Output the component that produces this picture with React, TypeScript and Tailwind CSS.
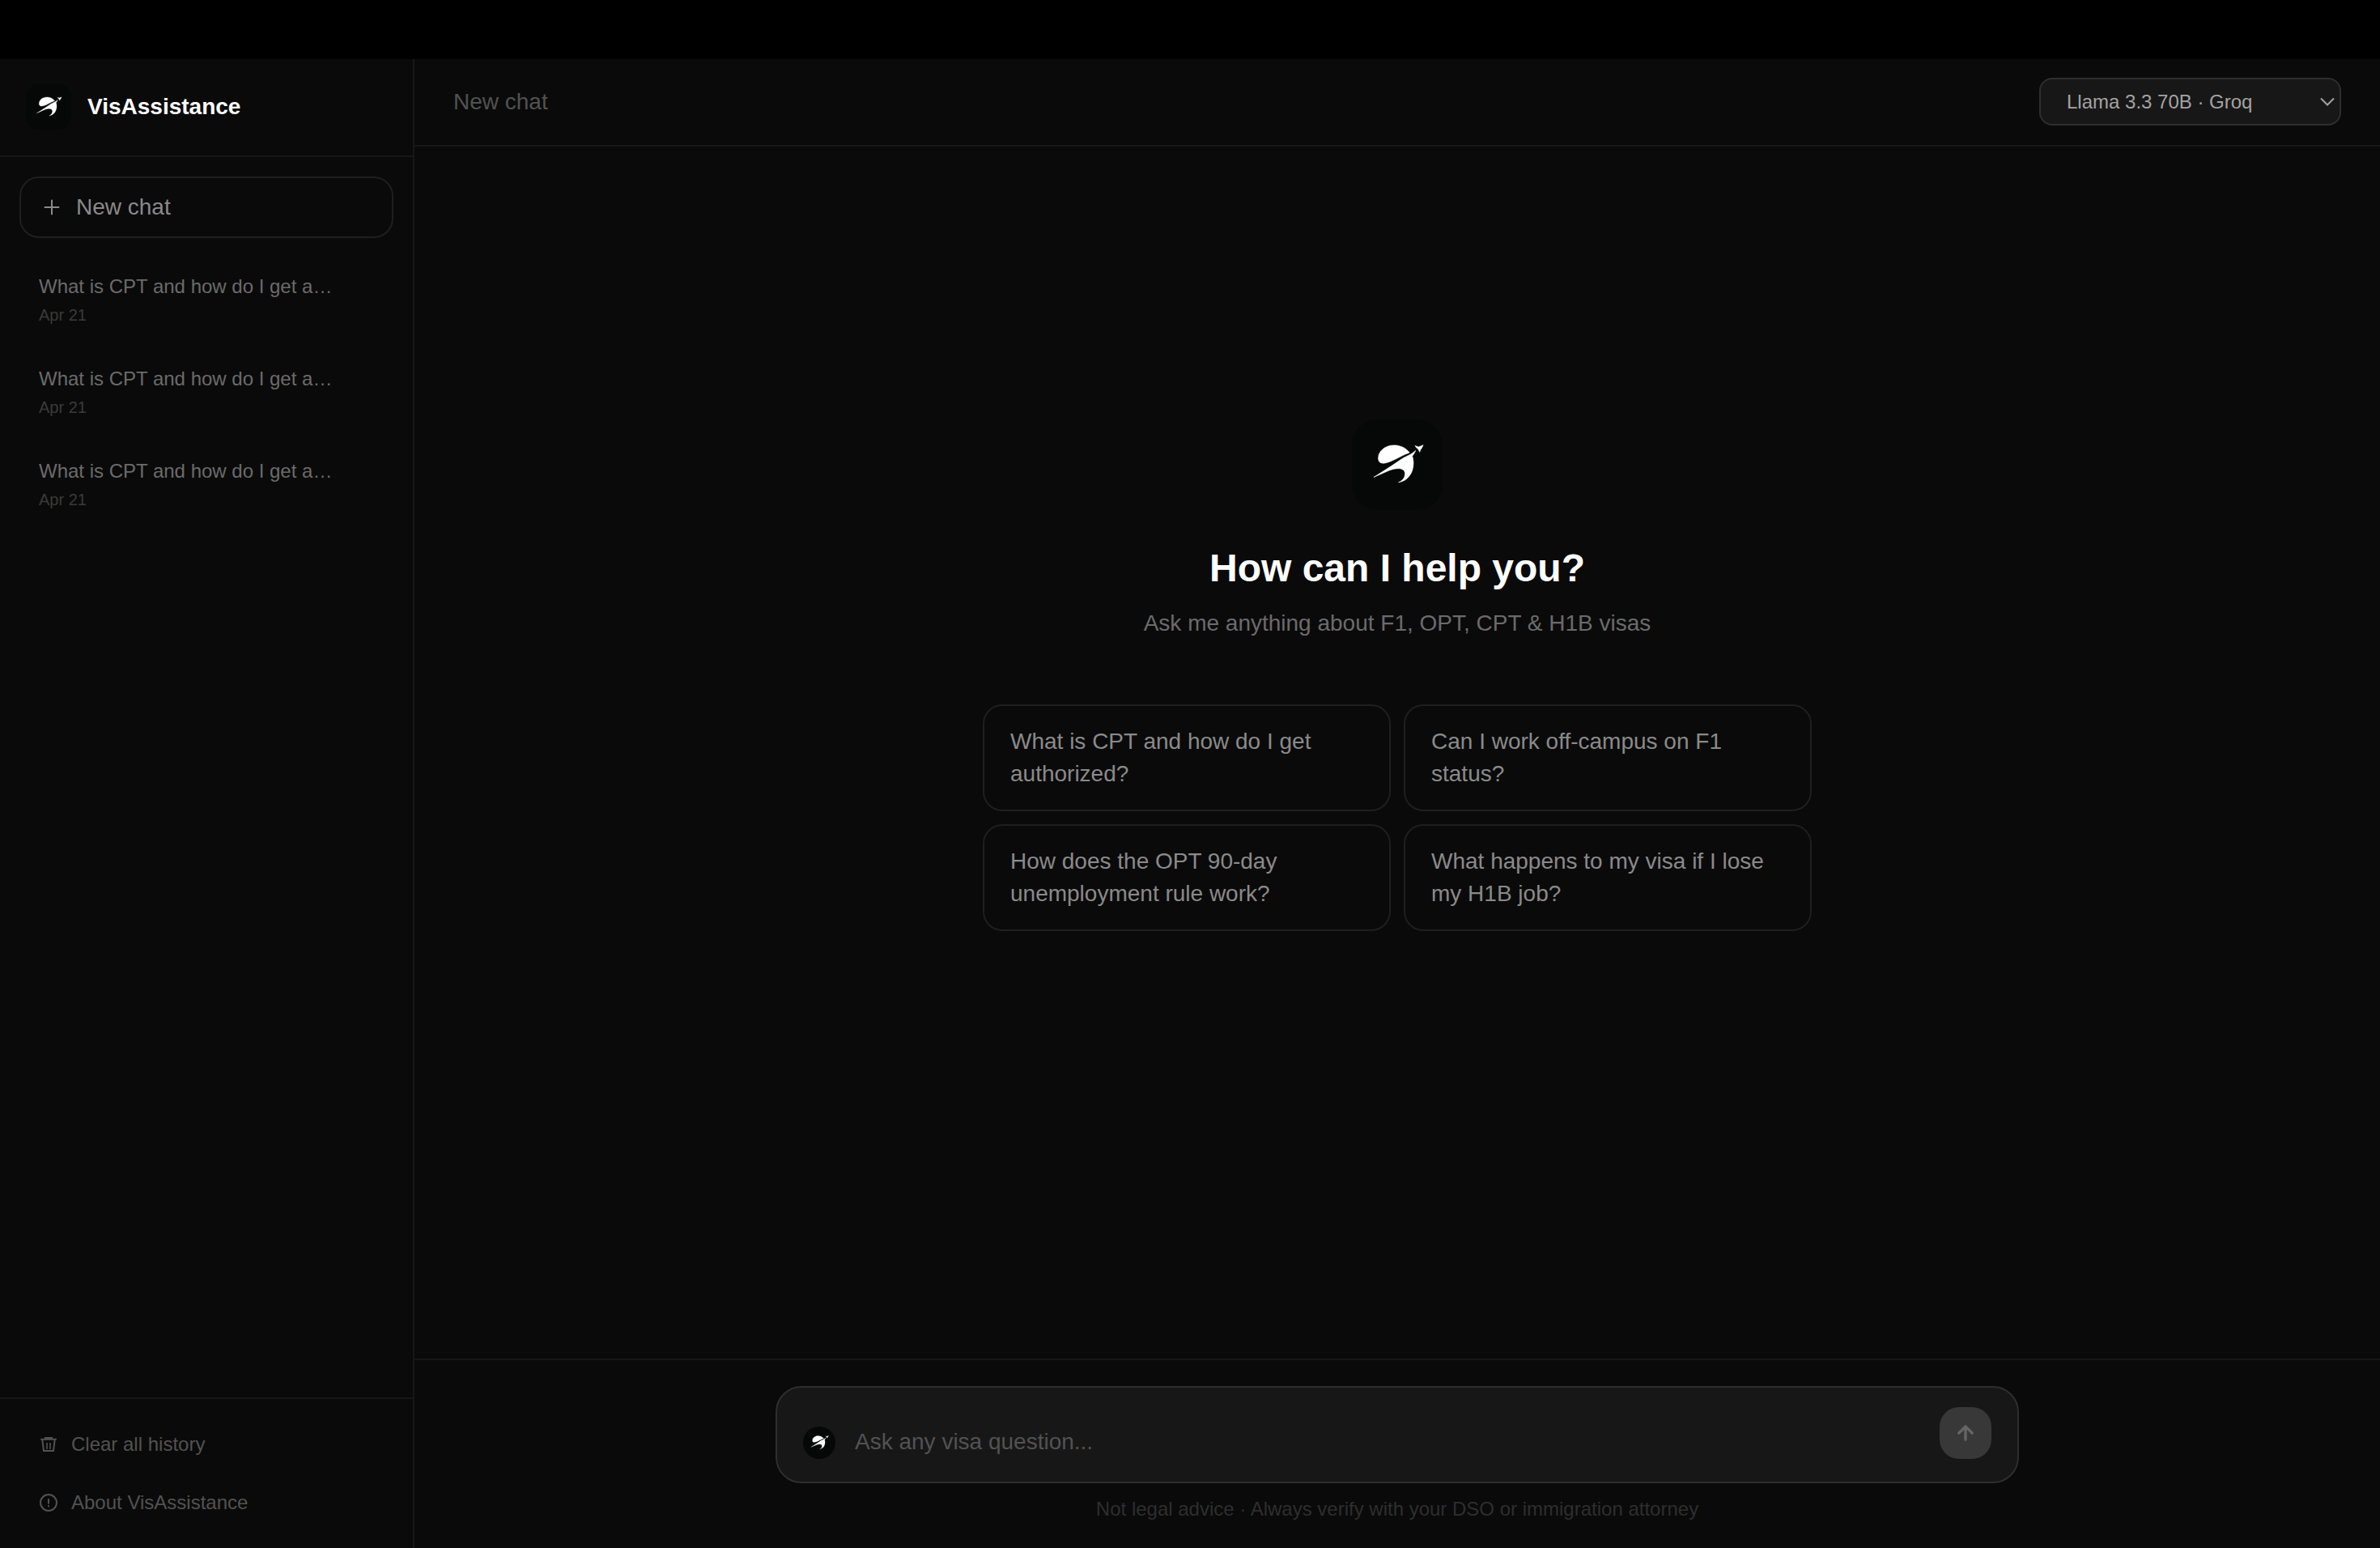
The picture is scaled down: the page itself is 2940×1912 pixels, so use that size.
import React from "react";

const conversations = [
  { id: 1, title: "What is CPT and how do I get a…", date: "Apr 21" },
  { id: 2, title: "What is CPT and how do I get a…", date: "Apr 21" },
  { id: 3, title: "What is CPT and how do I get a…", date: "Apr 21" },
];

const suggestions = [
  "What is CPT and how do I get authorized?",
  "Can I work off-campus on F1 status?",
  "How does the OPT 90-day unemployment rule work?",
  "What happens to my visa if I lose my H1B job?",
];

function Logo({ className }: { className: string }) {
  return (
    <div className={`shrink-0 overflow-hidden bg-[#050807] ${className}`}>
      <svg viewBox="0 0 112 112" className="block size-full" fill="#fff" stroke="#fff" strokeWidth="0.6" strokeLinejoin="round">
        <path d="M71.2 41C66 34.5 59 31.9 52 31.9C41 31.9 32.6 39 32.6 48C32.6 52.5 35 54.4 39.5 54.2C46 53.5 55 48.5 60 46C64 44 67 42.6 71.2 41Z" />
        <path d="M27 71.4L48.7 57.6L61 49.2C66 45.6 74 43.5 78.7 38.4C77.5 41.5 76 43.5 74.6 45.3C75.6 48.5 76 51 76 54.3C76 66.5 68.5 76.5 57.5 77.8C62.5 76 65.6 71.5 65.6 67.2C65.6 63 62.5 60.7 57.5 60.7C53 60.7 49 61.8 45 63.5Z" />
        <path d="M78 32.6L82.4 34L88.1 31.7L86 36L84.8 37.3L83.7 40.4L81.8 36.6L79.8 35.2Z" />
      </svg>
    </div>
  );
}

function Sidebar() {
  return (
    <aside className="flex w-[512px] shrink-0 flex-col border-r-2 border-[#171717]">
      <div className="flex h-[121px] shrink-0 items-center gap-5 border-b-2 border-[#171717] px-8 pb-px">
        <Logo className="size-14 rounded-2xl" />
        <span className="text-[28px] leading-10 font-bold text-white">VisAssistance</span>
      </div>
      <div className="px-6 pt-6">
        <button className="flex h-[76px] w-full items-center gap-5 rounded-3xl border-2 border-[#1f1f1f] px-7 text-[28px] leading-10 text-[#8a8a8a]">
          <svg viewBox="0 0 20 20" className="size-5" fill="none" stroke="currentColor" strokeWidth="2" strokeLinecap="round">
            <path d="M10 1.5v17M1.5 10h17" />
          </svg>
          New chat
        </button>
      </div>
      <nav className="flex grow flex-col gap-1 px-6 pt-6">
        {conversations.map((c) => (
          <div key={c.id} className="h-[110px] rounded-2xl px-6 pt-5">
            <div className="text-[24px] leading-8 text-[#6b6b6b]">{c.title}</div>
            <div className="mt-[5px] text-[20px] leading-7 text-[#3a3a3a]">{c.date}</div>
          </div>
        ))}
      </nav>
      <div className="flex h-[186px] shrink-0 flex-col border-t-2 border-[#171717] px-12 pt-5 text-[24px] text-[#525252]">
        <div className="flex h-[72px] items-center gap-4">
          <svg viewBox="0 0 24 24" className="size-6" fill="none" stroke="currentColor" strokeWidth="2">
            <path d="M2.2 5.7H21.8M8 5V4H16V5M4.3 6L6 20H18L19.7 6" />
            <path d="M10 10V18M14 10V18" strokeWidth="1.6" />
          </svg>
          Clear all history
        </div>
        <div className="flex h-[72px] items-center gap-4">
          <svg viewBox="0 0 24 24" className="size-6" fill="none" stroke="currentColor" strokeWidth="2">
            <circle cx="12" cy="12" r="10" />
            <path d="M12 7.2v6.2M12 15.3v2" />
          </svg>
          About VisAssistance
        </div>
      </div>
    </aside>
  );
}

function TopBar() {
  return (
    <header className="flex h-[108px] shrink-0 items-center justify-between border-b-2 border-[#171717] pr-12 pb-px pl-12">
      <span className="text-[28px] leading-10 text-[#525252]">New chat</span>
      <div className="flex h-[59px] w-[373px] items-center justify-between rounded-2xl border-2 border-[#2e2e2e] bg-[#171717] pr-[5px] pl-8 text-[24px] text-[#a3a3a3]">
        Llama 3.3 70B · Groq
        <svg viewBox="0 0 20 12" className="h-3 w-5" fill="none" stroke="currentColor" strokeWidth="2">
          <path d="M2 1.5l8 8 8-8" />
        </svg>
      </div>
    </header>
  );
}

function Composer() {
  return (
    <footer className="flex h-[234px] shrink-0 flex-col items-center border-t-2 border-[#171717] pt-8">
      <div className="flex h-[120px] w-[1536px] items-end rounded-4xl border-2 border-[#2e2e2e] bg-[#171717] px-8 pb-7">
        <Logo className="size-10 rounded-full" />
        <span className="mb-px ml-6 grow text-[28px] leading-10 text-[#525252]">Ask any visa question...</span>
        <button className="flex size-16 items-center justify-center rounded-3xl bg-[#383838] text-[#666]">
          <svg viewBox="0 0 24 24" className="size-7" fill="none" stroke="currentColor" strokeWidth="2.8" strokeLinecap="round" strokeLinejoin="round">
            <path d="M12 19V5M5 12l7-7 7 7" />
          </svg>
        </button>
      </div>
      <p className="mt-4 text-[24px] leading-8 text-[#2e2e2e]">
        Not legal advice · Always verify with your DSO or immigration attorney
      </p>
    </footer>
  );
}

export default function App() {
  return (
    <div className="flex h-[1912px] w-[2940px] flex-col bg-[#0a0a0a] font-['Liberation_Sans',Arial,sans-serif]">
      <div className="h-[73px] shrink-0 bg-black" />
      <div className="flex min-h-0 grow">
        <Sidebar />
        <main className="flex grow flex-col">
          <TopBar />
          <section className="flex grow flex-col items-center pt-[337px]">
            <Logo className="size-28 rounded-4xl" />
            <h1 className="mt-10 text-[48px] leading-16 font-bold text-white">How can I help you?</h1>
            <p className="mt-4 text-[28px] leading-10 text-[#6b6b6b]">Ask me anything about F1, OPT, CPT &amp; H1B visas</p>
            <div className="mt-20 grid w-[1024px] grid-cols-2 gap-4">
              {suggestions.map((s) => (
                <button
                  key={s}
                  className="h-[132px] rounded-3xl border-2 border-[#1f1f1f] px-8 text-left text-[28px] leading-10 text-[#8a8a8a]"
                >
                  {s}
                </button>
              ))}
            </div>
          </section>
          <Composer />
        </main>
      </div>
    </div>
  );
}
